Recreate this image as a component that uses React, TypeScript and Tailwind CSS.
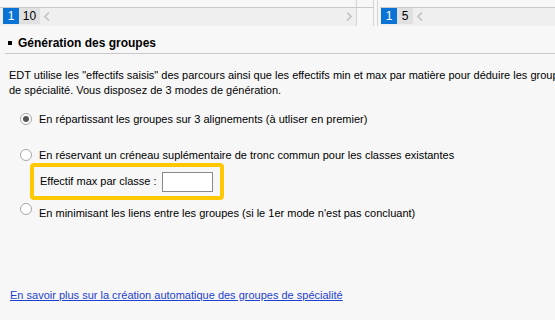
function Chevron({ dir }: { dir: "left" | "right" }) {
  return (
    <div className="flex h-[16px] w-[14px] items-center justify-center">
      <svg width="6" height="9" viewBox="0 0 6 9" fill="none">
        <path
          d={dir === "left" ? "M5 0.5 L1 4.5 L5 8.5" : "M1 0.5 L5 4.5 L1 8.5"}
          stroke="#c2c2c2"
          strokeWidth="1.6"
        />
      </svg>
    </div>
  );
}

export default function App() {
  return (
    <div className="h-[320px] w-[555px] overflow-hidden bg-[#f7f7f7] font-['Liberation_Sans',Arial,sans-serif] text-[11px] text-black">
      {/* Top list strips */}
      <div className="flex h-[26px]">
        <div className="flex w-[374px] flex-col border-r border-[#d4d4d4]">
          <div className="flex h-[8px] border-b border-[#c8c8c8]">
            <div className="flex-1" />
            <div className="w-[17px] border-l border-[#d4d4d4]" />
          </div>
          <div className="flex flex-1 items-stretch bg-[#efefef] pl-[3px]">
            <div className="flex h-[16px] w-[16px] items-center justify-center bg-[#0a73d6] text-[12px] text-white">
              1
            </div>
            <div className="flex h-[16px] w-[21px] items-center justify-center bg-[#e0e0e0] text-[12px]">
              10
            </div>
            <Chevron dir="left" />
            <div className="flex-1" />
            <Chevron dir="right" />
            <div className="w-[17px] border-l border-[#d4d4d4] bg-[#f7f7f7]" />
          </div>
        </div>
        <div className="w-[4px] border-r border-[#d4d4d4]" />
        <div className="flex flex-1 flex-col pl-[2px]">
          <div className="h-[8px] border-b border-[#c8c8c8]" />
          <div className="flex flex-1 bg-[#efefef] pl-[1px]">
            <div className="flex h-[16px] w-[16px] items-center justify-center bg-[#0a73d6] text-[12px] text-white">
              1
            </div>
            <div className="flex h-[16px] w-[16px] items-center justify-center bg-[#e0e0e0] text-[12px]">
              5
            </div>
            <Chevron dir="left" />
          </div>
        </div>
      </div>

      {/* Section header */}
      <div className="ml-[5px] mt-[8px] flex h-[20px] items-center gap-[6px] border-b border-[#c8c8c8] pl-[3px] pb-[2px]">
        <span className="h-[4px] w-[4px] bg-black" />
        <span className="text-[12px] font-bold">Génération des groupes</span>
      </div>

      {/* Intro */}
      <div className="mt-[14px] whitespace-nowrap pl-[9px] leading-[15px]">
        <p>
          EDT utilise les "effectifs saisis" des parcours ainsi que les effectifs min et max par matière pour déduire les groupes
        </p>
        <p>de spécialité. Vous disposez de 3 modes de génération.</p>
      </div>

      {/* Options */}
      <div className="mt-[13px] flex flex-col pl-[20px]">
        <label className="flex h-[16px] items-center gap-[7px]">
          <span className="flex h-[12px] w-[12px] items-center justify-center rounded-full border border-[#a8a8a8] bg-white">
            <span className="h-[6px] w-[6px] rounded-full bg-[#555]" />
          </span>
          <span>En répartissant les groupes sur 3 alignements (à utliser en premier)</span>
        </label>

        <label className="mt-[20px] flex h-[16px] items-center gap-[7px]">
          <span className="h-[12px] w-[12px] rounded-full border border-[#a8a8a8] bg-white" />
          <span>En réservant un créneau suplémentaire de tronc commun pour les classes existantes</span>
        </label>

        <div className="ml-[10px] flex h-[37px] w-[194px] items-center gap-[5px] rounded-[4px] border-[4px] border-[#ffc800] pl-[6px]">
          <span>Effectif max par classe :</span>
          <span className="h-[20px] w-[51px] border border-[#8a8a8a] bg-white" />
        </div>

        <label className="mt-[3px] flex h-[16px] items-start gap-[7px]">
          <span className="h-[12px] w-[12px] rounded-full border border-[#a8a8a8] bg-white" />
          <span className="mt-[2px]">En minimisant les liens entre les groupes (si le 1er mode n'est pas concluant)</span>
        </label>
      </div>

      <div className="mt-[68px] pl-[10px]">
        <a href="#" className="text-[#1f3fd0] underline">
          En savoir plus sur la création automatique des groupes de spécialité
        </a>
      </div>
    </div>
  );
}
